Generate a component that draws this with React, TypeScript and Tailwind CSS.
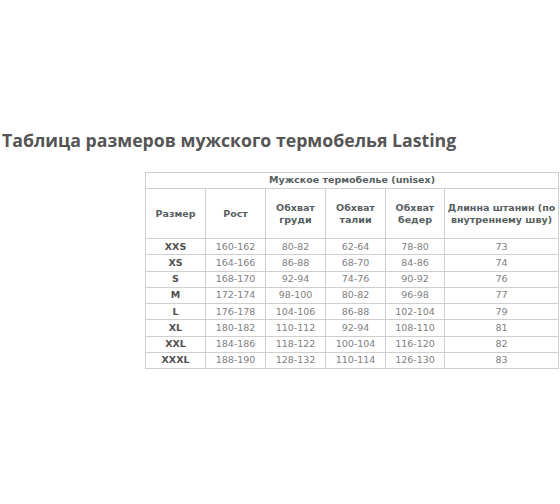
const rows = [
  ['XXS', '160-162', '80-82', '62-64', '78-80', '73'],
  ['XS', '164-166', '86-88', '68-70', '84-86', '74'],
  ['S', '168-170', '92-94', '74-76', '90-92', '76'],
  ['M', '172-174', '98-100', '80-82', '96-98', '77'],
  ['L', '176-178', '104-106', '86-88', '102-104', '79'],
  ['XL', '180-182', '110-112', '92-94', '108-110', '81'],
  ['XXL', '184-186', '118-122', '100-104', '116-120', '82'],
  ['XXXL', '188-190', '128-132', '110-114', '126-130', '83'],
];

export default function App() {
  return (
    <div className="w-[560px] h-[504px] bg-white overflow-hidden">
      {/* Title */}
      <h1
        className="pt-[128px] pl-[2px] text-[17.7px] font-bold leading-[24px] text-[#555555]"
        style={{ fontFamily: '"Open Sans", sans-serif' }}
      >
        Таблица размеров мужского термобелья Lasting
      </h1>

      {/* Size table */}
      <div className="mt-[20px] ml-[145px]">
        <table
          className="border-collapse table-fixed w-[413px] text-[9.5px] text-center"
          style={{ fontFamily: '"DejaVu Sans", Verdana, sans-serif' }}
        >
          <colgroup>
            <col className="w-[60px]" />
            <col className="w-[60px]" />
            <col className="w-[60px]" />
            <col className="w-[60px]" />
            <col className="w-[59px]" />
            <col className="w-[114px]" />
          </colgroup>
          <thead>
            <tr className="h-[16px]">
              <th colSpan={6} className="border border-[#cfcfcf] font-bold text-[#56605f]">
                Мужское термобелье (unisex)
              </th>
            </tr>
            <tr className="h-[50px] font-bold text-[#56605f] leading-[12px]">
              <th className="border border-[#cfcfcf]">Размер</th>
              <th className="border border-[#cfcfcf]">Рост</th>
              <th className="border border-[#cfcfcf]">Обхват<br />груди</th>
              <th className="border border-[#cfcfcf]">Обхват<br />талии</th>
              <th className="border border-[#cfcfcf]">Обхват<br />бедер</th>
              <th className="border border-[#cfcfcf]">Длинна штанин (по<br />внутреннему шву)</th>
            </tr>
          </thead>
          <tbody>
            {rows.map((r) => (
              <tr key={r[0]} className="h-[16.25px]">
                <td className="border border-[#cfcfcf] font-bold text-[#505050]">{r[0]}</td>
                {r.slice(1).map((c, i) => (
                  <td key={i} className="border border-[#cfcfcf] text-[#808080]">{c}</td>
                ))}
              </tr>
            ))}
          </tbody>
        </table>
      </div>
    </div>
  );
}
